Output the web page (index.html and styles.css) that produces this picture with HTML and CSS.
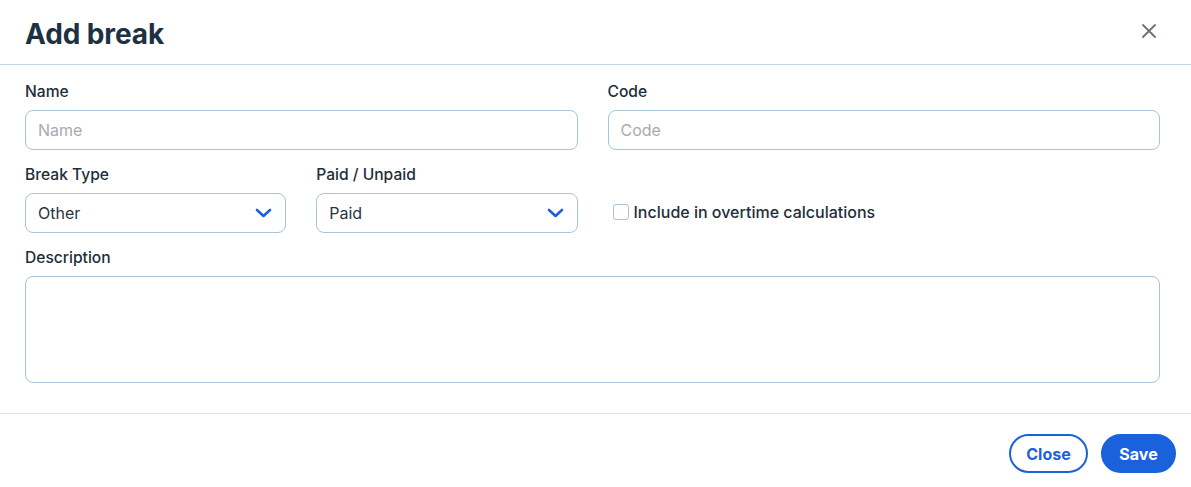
FILE: index.html
```html
<!DOCTYPE html>
<html lang="en">
<head>
    <meta charset="UTF-8">
    <meta name="viewport" content="width=device-width, initial-scale=1.0">
    <title>Add break</title>
    <link rel="stylesheet" href="styles.css">
</head>
<body>

    <div class="modal">
        <div class="modal-header">
            <h1 class="modal-title">Add break</h1>
            <button class="btn-x" type="button" aria-label="Close">
                <svg width="16" height="16" viewBox="0 0 16 16">
                    <path d="M2 2L14 14M14 2L2 14" stroke="#6b7177" stroke-width="1.8" stroke-linecap="round"/>
                </svg>
            </button>
        </div>

        <form class="modal-body">
            <div class="field span-2">
                <label class="field-label">Name</label>
                <input class="input" type="text" placeholder="Name">
            </div>
            <div class="field span-2">
                <label class="field-label">Code</label>
                <input class="input" type="text" placeholder="Code">
            </div>

            <div class="field">
                <label class="field-label">Break Type</label>
                <div class="select">
                    <span>Other</span>
                    <svg width="17" height="10" viewBox="0 0 17 10">
                        <path d="M2 2L8.5 8L15 2" fill="none" stroke="#1a62dc" stroke-width="2.6" stroke-linecap="round" stroke-linejoin="round"/>
                    </svg>
                </div>
            </div>
            <div class="field">
                <label class="field-label">Paid / Unpaid</label>
                <div class="select">
                    <span>Paid</span>
                    <svg width="17" height="10" viewBox="0 0 17 10">
                        <path d="M2 2L8.5 8L15 2" fill="none" stroke="#1a62dc" stroke-width="2.6" stroke-linecap="round" stroke-linejoin="round"/>
                    </svg>
                </div>
            </div>
            <div class="check-field span-2">
                <span class="checkbox"></span>
                <span class="check-label">Include in overtime calculations</span>
            </div>

            <div class="field span-4">
                <label class="field-label">Description</label>
                <textarea class="input textarea"></textarea>
            </div>
        </form>

        <div class="modal-footer">
            <button class="btn btn-outline" type="button">Close</button>
            <button class="btn btn-primary" type="button">Save</button>
        </div>
    </div>

</body>
</html>
```

FILE: styles.css
```css
/* Reset */
* {
    margin: 0;
    padding: 0;
    box-sizing: border-box;
    font-family: Inter, "Noto Sans", Arial, sans-serif;
}

body {
    background: #fff;
    color: #27313c;
}

/* Header */
.modal-header {
    height: 65px;
    padding: 4px 25px 0;
    display: flex;
    align-items: center;
    justify-content: space-between;
    border-bottom: 1px solid #c3d8e5;
}

.modal-title {
    font-size: 28px;
    font-weight: 700;
    color: #1d3142;
    letter-spacing: -0.1px;
}

.btn-x {
    background: none;
    border: none;
    width: 24px;
    height: 24px;
    margin-right: 5px;
    margin-top: -6px;
    display: flex;
    align-items: center;
    justify-content: center;
    cursor: pointer;
}

/* Form */
.modal-body {
    padding: 17px 31px 30px 25px;
    display: grid;
    grid-template-columns: repeat(4, 1fr);
    column-gap: 30px;
    row-gap: 15px;
}

.span-2 {
    grid-column: span 2;
}

.span-4 {
    grid-column: span 4;
}

.field {
    display: flex;
    flex-direction: column;
}

.field-label {
    font-size: 15.6px;
    font-weight: 500;
    line-height: 20px;
    color: #232e39;
    margin-bottom: 8px;
}

.input {
    height: 40px;
    border: 1px solid #a9c3d7;
    border-radius: 8px;
    padding: 0 12px;
    font-size: 16px;
    color: #27313c;
    outline: none;
}

.input::placeholder {
    color: #a7abb0;
}

.textarea {
    height: 107px;
    resize: none;
}

.select {
    height: 40px;
    border: 1px solid #a9c3d7;
    border-radius: 8px;
    padding: 0 13px 0 12px;
    display: flex;
    align-items: center;
    justify-content: space-between;
    font-size: 16px;
    color: #2b3540;
}

/* Checkbox */
.check-field {
    align-self: end;
    height: 40px;
    display: flex;
    align-items: center;
    padding-left: 5px;
    gap: 5px;
    margin-bottom: 1px;
}

.checkbox {
    width: 16px;
    height: 16px;
    border: 1px solid #a9c3d7;
    border-radius: 3px;
}

.check-label {
    font-size: 16px;
    font-weight: 500;
    color: #232e39;
}

/* Footer */
.modal-footer {
    border-top: 1px solid #dedfe1;
    padding: 20px 15px;
    display: flex;
    justify-content: flex-end;
    gap: 13px;
}

.btn {
    height: 39px;
    border-radius: 20px;
    font-size: 16px;
    font-weight: 700;
    cursor: pointer;
}

.btn-outline {
    width: 79px;
    background: #fff;
    border: 2px solid #1a62dc;
    color: #1a62dc;
}

.btn-primary {
    width: 75px;
    background: #1a62dc;
    border: 2px solid #1a62dc;
    color: #fff;
}
```
